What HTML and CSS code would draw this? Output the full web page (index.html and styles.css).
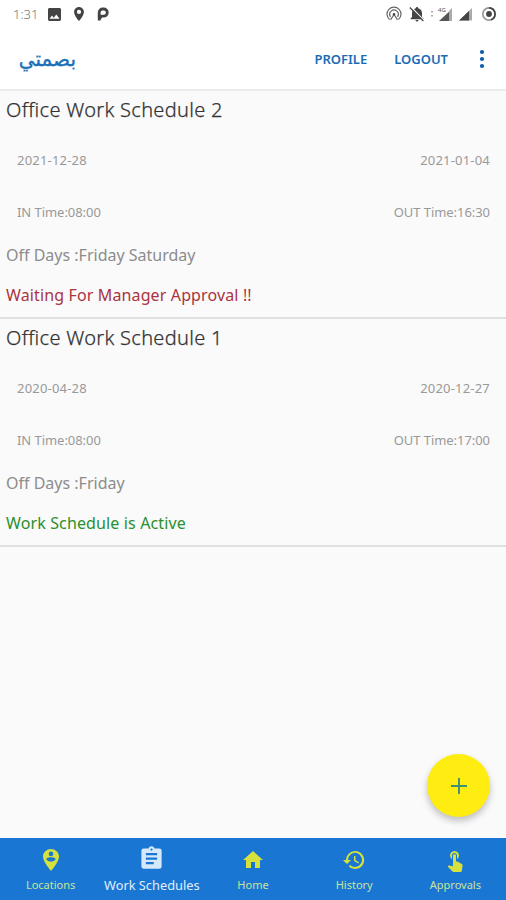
FILE: index.html
```html
<!DOCTYPE html>
<html lang="en">
<head>
<meta charset="utf-8">
<title>Work Schedules</title>
<link rel="stylesheet" href="styles.css">
</head>
<body>
<div class="app">
  <div class="status">
    <span class="clock">1:31</span>
    <svg class="s-image" viewBox="3 3 18 18"><path d="M21 19V5c0-1.100-.9-2-2-2H5c-1.100 0-2 .9-2 2v14c0 1.100.9 2 2 2h14c1.100 0 2-.9 2-2zM8.500 13.500l2.500 3 3.500-4.500 4.500 6H5z"/></svg>
    <svg class="s-pin" viewBox="5 2 14 20"><path fill-rule="evenodd" d="M12 2C8.100 2 5 5.100 5 9c0 5.300 7 13 7 13s7-7.700 7-13c0-3.900-3.100-7-7-7zm0 10a3 3 0 1 1 0-6 3 3 0 0 1 0 6z"/></svg>
    <svg class="s-p" viewBox="0 0 12 14"><path d="M2.200 9.200V5.500a3.500 3.500 0 0 1 3.500-3.500h1a3.500 3.500 0 0 1 0 7.200H2.200" fill="none" stroke="#444" stroke-width="2.800"/><path d="M.8 8.500h4.200v2L3.300 13.500H.8z"/></svg>
    <span class="spacer"></span>
    <svg class="s-cast" viewBox="0 0 16 16"><g fill="none" stroke="#666" stroke-width="1.200"><path d="M3.500 13.500a7 7 0 1 1 9 0M4.500 10.800a4.300 4.300 0 1 1 7 0"/><path d="M4.500 13.800L8 8.500l3.500 5.300"/></g><circle cx="8" cy="8.300" r="1.200"/></svg>
    <svg class="s-bell" viewBox="0 0 16 16"><path d="M8 1a1.200 1.200 0 0 1 1.200 1.200C11.700 2.800 13 4.700 13 7v4l1.500 1.500v.7h-13v-.7L3 11V7c0-2.300 1.300-4.200 3.800-4.800A1.200 1.200 0 0 1 8 1zM6.500 14h3a1.500 1.500 0 0 1-3 0z"/><path d="M2 1l13 13.500" stroke="#fff" stroke-width="1.300"/><path d="M.8 1.500l13.500 13.500" stroke="#444" stroke-width="1.200"/></svg>
    <svg class="s-signal" viewBox="0 0 24 16"><path d="M22 3v12H9z" fill="#555"/><path d="M22 2v13h-3V5z" fill="#aaa"/><path d="M1 5h2v1.500H1zM1 9h2v1.500H1z" fill="#aaa"/><text x="8" y="6" class="net">4G</text></svg>
    <svg class="s-signal2" viewBox="0 0 15 14"><path d="M14 1v12.500H1z" fill="#aaa"/><path d="M11 4v9.500H1z"/></svg>
    <svg class="s-ring" viewBox="0 0 16 16"><circle cx="8" cy="8" r="6.200" fill="none" stroke="#999" stroke-width="1.700"/><path d="M8 1.800a6.200 6.200 0 0 1 2 12" fill="none" stroke="#444" stroke-width="1.700"/><circle cx="8" cy="8" r="2.900"/></svg>
  </div>
  <header class="bar">
    <h1 class="brand" lang="ar" dir="rtl">بصمتي</h1>
    <a class="action profile">PROFILE</a>
    <a class="action logout">LOGOUT</a>
    <svg class="more" viewBox="0 0 6 20"><circle cx="3" cy="3" r="2.100"/><circle cx="3" cy="10" r="2.100"/><circle cx="3" cy="17" r="2.100"/></svg>
  </header>
  <main class="list">
    <section class="card">
      <h2 class="title">Office Work Schedule 2</h2>
      <div class="row dates"><span>2021-12-28</span><span>2021-01-04</span></div>
      <div class="row times"><span>IN Time:08:00</span><span>OUT Time:16:30</span></div>
      <p class="off">Off Days :Friday Saturday</p>
      <p class="state waiting">Waiting For Manager Approval !!</p>
    </section>
    <section class="card">
      <h2 class="title">Office Work Schedule 1</h2>
      <div class="row dates"><span>2020-04-28</span><span>2020-12-27</span></div>
      <div class="row times"><span>IN Time:08:00</span><span>OUT Time:17:00</span></div>
      <p class="off">Off Days :Friday</p>
      <p class="state active">Work Schedule is Active</p>
    </section>
  </main>
  <button class="fab" aria-label="Add"><svg viewBox="0 0 16 16"><path d="M8 0v16M0 8h16" stroke="#3f8f70" stroke-width="1.900"/></svg></button>
  <nav class="nav">
    <a class="tab"><svg viewBox="0 0 24 24"><path fill-rule="evenodd" d="M12 1C7.900 1 4 4.300 4 8.500 4 14 12 23 12 23s8-9 8-14.500C20 4.300 16.100 1 12 1zm0 2.600a2.300 2.300 0 1 1 0 4.600 2.300 2.300 0 0 1 0-4.600zm0 10c-2 0-3.700-.9-4.700-2.400 0-1.400 3.100-2 4.700-2s4.700.6 4.700 2c-1 1.500-2.700 2.400-4.700 2.400z"/></svg><span>Locations</span></a>
    <a class="tab selected"><svg viewBox="0 0 24 24"><path fill-rule="evenodd" d="M19 3h-4.200a3 3 0 0 0-5.600 0H5a2 2 0 0 0-2 2v14c0 1.100.9 2 2 2h14a2 2 0 0 0 2-2V5a2 2 0 0 0-2-2zm-7 0a1 1 0 1 1 0 2 1 1 0 0 1 0-2zm2 14H7v-2h7zm3-4H7v-2h10zm0-4H7V7h10z"/></svg><span>Work Schedules</span></a>
    <a class="tab"><svg viewBox="0 0 24 24"><path d="M10 20v-6h4v6h5v-8h3L12 3 2 12h3v8z"/></svg><span>Home</span></a>
    <a class="tab"><svg viewBox="0 0 24 24"><path d="M13 3a9 9 0 0 0-9 9H1l3.900 3.900.1.100L9 12H6a7 7 0 1 1 2.100 4.900l-1.400 1.400A9 9 0 1 0 13 3zm-1 5v5l4.300 2.500.7-1.200-3.500-2.100V8z"/></svg><span>History</span></a>
    <a class="tab"><svg viewBox="0 0 24 24"><path d="M9 11.200V7.500a2.500 2.500 0 0 1 5 0v3.700a4.500 4.500 0 1 0-5 0zm9.800 4.700l-4.500-2.300c-.2-.1-.4-.1-.6-.1H13v-6a1.500 1.500 0 0 0-3 0v10.700l-3.600-.7c-.5-.1-.8.1-1 .3l-.8.800 4.900 4.900c.3.300.7.500 1.100.5h6.800c.7 0 1.300-.6 1.400-1.300l.8-5.300c.1-.6-.2-1.200-.8-1.500z"/></svg><span>Approvals</span></a>
  </nav>
</div>
</body>
</html>
```
FILE: styles.css
```css
* { box-sizing: border-box; }
body { margin: 0; font-family: "Noto Sans", "Open Sans", sans-serif; background: #fafafa; }
h1, h2, p { margin: 0; font-weight: 400; }
.app { width: 506px; height: 900px; display: flex; flex-direction: column; position: relative; overflow: hidden; }
.status { height: 28px; background: #fff; display: flex; align-items: center; padding: 0 9px 0 13px; flex: none; fill: #444; }
.clock { width: 25px; margin-right: 10px; font-size: 13px; font-weight: 300; color: #777; white-space: nowrap; }
.s-image { width: 13px; height: 13px; }
.s-pin { width: 10px; height: 14px; margin-left: 13px; }
.s-p { width: 12px; height: 14px; margin-left: 13px; }
.spacer { flex: 1; }
.s-cast { width: 16px; height: 16px; margin-right: 7px; }
.s-bell { width: 16px; height: 16px; margin-right: 5px; }
.s-signal { width: 24px; height: 16px; margin-right: 4px; }
.s-signal2 { width: 15px; height: 14px; margin-right: 8px; }
.s-ring { width: 16px; height: 16px; }
.net { font-size: 6px; fill: #555; }
.bar { height: 63px; flex: none; background: #fff; display: flex; align-items: center; padding: 0 21px 0 18px; border-bottom: 2px solid #ebebeb; color: #1a6bb5; }
.brand { font-family: "DejaVu Sans", sans-serif; font-size: 20px; font-weight: 400; -webkit-text-stroke: .35px #1a70b8; width: 58px; line-height: 28px; margin-right: auto; color: #1a70b8; white-space: nowrap; }
.action { font-size: 13px; font-weight: 600; white-space: nowrap; }
.profile { margin-right: 27px; }
.logout { margin-right: 31px; }
.more { width: 6px; height: 20px; fill: #0c5cb0; }
.list { flex: 1; }
.card { height: 228px; border-bottom: 2px solid #e0e0e0; display: flex; flex-direction: column; padding: 0 16px 0 6px; }
.title { font-size: 20px; line-height: 28px; height: 43px; padding-top: 5px; color: #333; font-weight: 300; -webkit-text-stroke: .25px #333; letter-spacing: .3px; white-space: nowrap; }
.row { display: flex; justify-content: space-between; padding-left: 11px; font-size: 13px; line-height: 20px; color: #999; height: 52px; padding-top: 16px; }
.dates { letter-spacing: .2px; }
.times { letter-spacing: -.05px; }
.off { font-size: 16px; line-height: 24px; height: 40px; padding-top: 5px; color: #8c8c8c; }
.state { font-size: 16px; line-height: 24px; padding-top: 5px; white-space: nowrap; letter-spacing: .13px; }
.waiting { color: #a93440; }
.active { color: #28902e; }
.fab { position: absolute; right: 16px; bottom: 83px; width: 63px; height: 63px; border: 0; border-radius: 50%; background: #ffed12; box-shadow: 0 4px 7px rgba(0,0,0,.24); display: flex; align-items: center; justify-content: center; padding: 0; }
.fab svg { width: 16px; height: 16px; }
.nav { height: 62px; flex: none; background: #1976d2; display: grid; grid-template-columns: repeat(5, 1fr); }
.tab { display: flex; flex-direction: column; align-items: center; padding-top: 10px; color: #c9e39a; fill: #d5e23e; font-size: 11px; line-height: 16px; white-space: nowrap; }
.tab svg { width: 24px; height: 24px; margin-bottom: 5px; }
.selected { color: #e0efff; fill: #d5e8fc; font-size: 12.800px; padding-top: 7px; }
.selected svg { width: 27px; height: 27px; margin-bottom: 5px; }
```
